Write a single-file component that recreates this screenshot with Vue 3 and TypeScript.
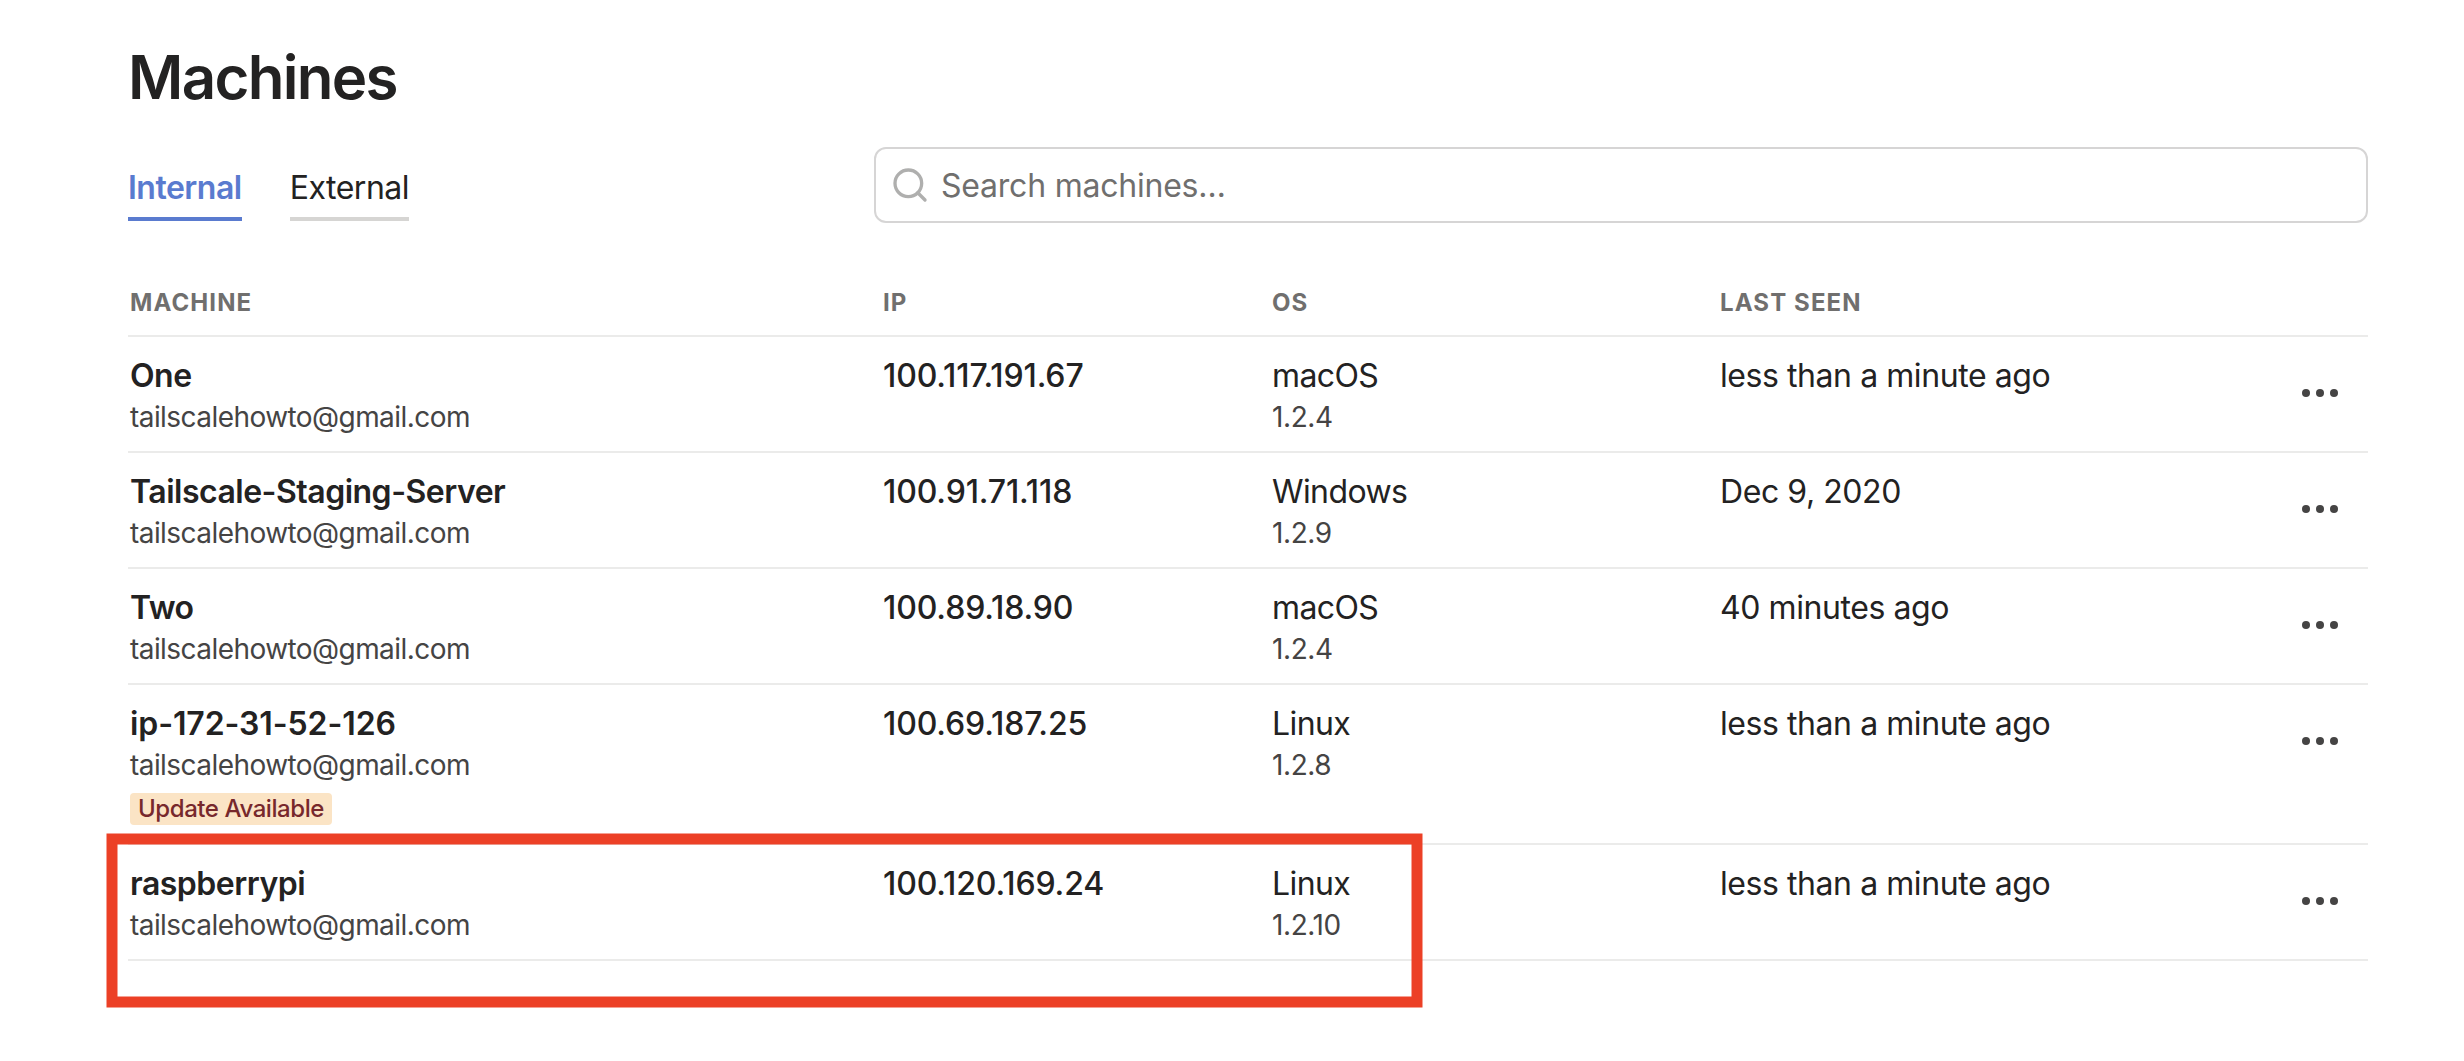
<template>
  <div class="page">
    <h1>Machines</h1>

    <div class="toolbar">
      <nav class="tabs">
        <a
          v-for="tab in tabs"
          :key="tab"
          class="tab"
          :class="{ active: tab === activeTab }"
          @click="activeTab = tab"
        >{{ tab }}</a>
      </nav>
      <label class="search">
        <svg class="search-icon" viewBox="0 0 24 24" fill="none" stroke="currentColor" stroke-width="2" stroke-linecap="round" stroke-linejoin="round">
          <circle cx="11" cy="11" r="8" />
          <line x1="21" y1="21" x2="16.65" y2="16.65" />
        </svg>
        <input v-model="query" type="text" placeholder="Search machines…" />
      </label>
    </div>

    <div class="table">
      <div class="row head">
        <div>Machine</div>
        <div>IP</div>
        <div>OS</div>
        <div>Last seen</div>
      </div>
      <div v-for="m in filtered" :key="m.ip" class="row">
        <div>
          <div class="name" :class="{ numeric: /\d/.test(m.name) }">{{ m.name }}</div>
          <div class="sub">{{ m.owner }}</div>
          <div v-if="m.update" class="badge">Update Available</div>
        </div>
        <div class="ip">{{ m.ip }}</div>
        <div>
          <div class="os">{{ m.os }}</div>
          <div class="sub version">{{ m.version }}</div>
        </div>
        <div class="seen">{{ m.lastSeen }}</div>
        <button class="menu" aria-label="Machine menu">
          <svg width="38" height="8" viewBox="0 0 38 8" fill="currentColor">
            <circle cx="4" cy="4" r="4" />
            <circle cx="18" cy="4" r="4" />
            <circle cx="32" cy="4" r="4" />
          </svg>
        </button>
        <svg v-if="m.name === highlighted" class="highlight" width="1317" height="175">
          <rect x="6" y="6" width="1305" height="163" fill="none" stroke="#ec4026" stroke-width="11" />
        </svg>
      </div>
    </div>
  </div>
</template>

<script setup lang="ts">
import { computed, ref } from 'vue'

interface Machine {
  name: string
  owner: string
  ip: string
  os: string
  version: string
  lastSeen: string
  update?: boolean
}

const tabs = ['Internal', 'External']
const activeTab = ref('Internal')
const query = ref('')
const highlighted = 'raspberrypi'
const owner = 'tailscalehowto@gmail.com'

const machines: Machine[] = [
  { name: 'One', owner, ip: '100.117.191.67', os: 'macOS', version: '1.2.4', lastSeen: 'less than a minute ago' },
  { name: 'Tailscale-Staging-Server', owner, ip: '100.91.71.118', os: 'Windows', version: '1.2.9', lastSeen: 'Dec 9, 2020' },
  { name: 'Two', owner, ip: '100.89.18.90', os: 'macOS', version: '1.2.4', lastSeen: '40 minutes ago' },
  { name: 'ip-172-31-52-126', owner, ip: '100.69.187.25', os: 'Linux', version: '1.2.8', lastSeen: 'less than a minute ago', update: true },
  { name: 'raspberrypi', owner, ip: '100.120.169.24', os: 'Linux', version: '1.2.10', lastSeen: 'less than a minute ago' }
]

const filtered = computed(() => {
  const q = query.value.toLowerCase()
  return machines.filter((m) => m.name.toLowerCase().includes(q) || m.ip.includes(q))
})
</script>

<style>
body {
  background: #fff;
}
</style>

<style scoped>
.page {
  box-sizing: border-box;
  width: 2464px;
  height: 1061px;
  padding: 41px 96px 0 128px;
  font-family: Inter, sans-serif;
  font-size: 32px;
  line-height: 48px;
  letter-spacing: -0.43px;
  color: #232222;
}
h1 {
  margin: 0;
  font-size: 60px;
  line-height: 72px;
  font-weight: 600;
  letter-spacing: -1.7px;
}
.toolbar {
  display: flex;
  justify-content: space-between;
  align-items: flex-start;
  margin-top: 34px;
}
.tabs {
  display: flex;
  gap: 48px;
  padding-top: 17px;
}
.tab {
  padding-bottom: 5px;
  border-bottom: 4px solid #d6d5d3;
  letter-spacing: -0.5px;
  cursor: pointer;
}
.tab.active {
  font-weight: 600;
  color: #5a7bcf;
  border-color: #5a7bcf;
}
.search {
  box-sizing: border-box;
  display: flex;
  align-items: center;
  gap: 11px;
  width: 1494px;
  height: 76px;
  padding: 0 14px;
  border: 2px solid #d6d5d5;
  border-radius: 12px;
}
.search-icon {
  width: 40px;
  height: 40px;
  color: #afafae;
}
.search input {
  flex: 1;
  padding: 2px 0 0;
  border: 0;
  outline: 0;
  background: none;
  font: inherit;
  letter-spacing: -0.22px;
  color: inherit;
}
.search input::placeholder {
  color: #706f6e;
}
.toolbar,
.table {
  width: 2240px;
}
.table {
  margin-top: 60px;
}
.row {
  position: relative;
  box-sizing: border-box;
  display: grid;
  grid-template-columns: 753px 389px 448px 1fr auto;
  min-height: 116px;
  padding: 17px 28px 15px 2px;
  border-bottom: 2px solid #ebebea;
}
.head {
  min-height: 0;
  padding-top: 0;
  padding-bottom: 12px;
  font-size: 24px;
  line-height: 40px;
  font-weight: 700;
  letter-spacing: 0.046em;
  text-transform: uppercase;
  color: #706f6e;
}
.name {
  font-weight: 600;
  letter-spacing: -0.5px;
}
.name.numeric {
  letter-spacing: -0.1px;
}
.ip {
  font-weight: 500;
  letter-spacing: -0.13px;
}
.os {
  letter-spacing: -0.6px;
}
.name,
.ip,
.os,
.seen {
  line-height: 44px;
}
.sub {
  font-size: 28px;
  line-height: 38px;
  letter-spacing: -0.56px;
  color: #454444;
}
.sub.version {
  letter-spacing: -0.4px;
}
.badge {
  width: fit-content;
  margin: 9px 0 3px;
  padding: 0 8px;
  border-radius: 4px;
  font-size: 24px;
  line-height: 32px;
  font-weight: 500;
  letter-spacing: -0.43px;
  color: #77282c;
  background: #fbe4c5;
}
.menu {
  align-self: start;
  display: flex;
  margin-top: 35px;
  padding: 0;
  border: 0;
  background: none;
  color: #454444;
  cursor: pointer;
}
/* annotation frame drawn over the row */
.highlight {
  position: absolute;
  top: -12px;
  left: -22px;
  pointer-events: none;
}
</style>
